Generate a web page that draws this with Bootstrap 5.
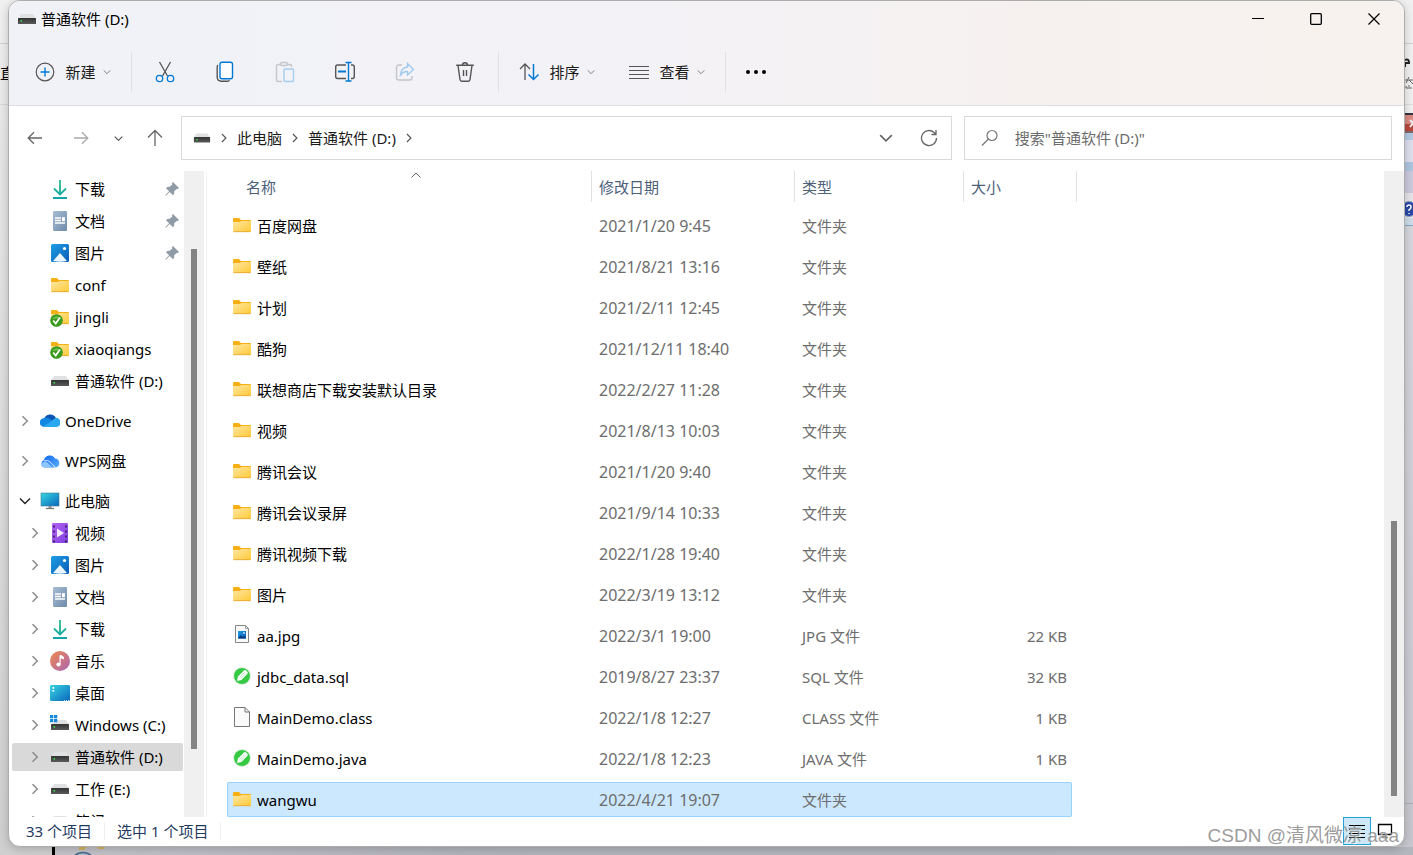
<!DOCTYPE html>
<html lang="zh-CN">
<head>
<meta charset="utf-8">
<meta name="viewport" content="width=device-width, initial-scale=1">
<title>普通软件 (D:)</title>
<link href="https://cdn.jsdelivr.net/npm/bootstrap@5.3.0/dist/css/bootstrap.min.css" rel="stylesheet">
<style>
  body { font-family: "Noto Sans", "Noto Sans CJK SC", sans-serif; font-size: 15px; line-height: 20px; color: #000; height: 100vh; background: linear-gradient(#f0f0f0, #e4e4e4 20%, #cfcfcf); }
  svg { display: block; flex: none; }
  .desk { z-index: 0; }
  .desk-foot { height: 8px; left: 55px; background: linear-gradient(90deg, #c3c3c9, #b2b4bc 30%, #b4b6be); border-left: 3px solid #000; margin-left: -3px; }
  .desk-left { width: 16px; height: 105px; top: 0; left: 0; border-bottom: 1px solid #d8d8d8; }
  .desk-side { width: 12px; }
  .win { z-index: 1; margin: 0 8px 8px 8px; background: #fff; border: 1px solid #adadad; border-radius: 12px; box-shadow: 0 2px 8px rgba(0,0,0,.2); min-height: 0; }
  .chrome { background: linear-gradient(90deg, #f0f2f8, #f3f2f6 45%, #f6f1ef 75%, #f7f2ee); border-bottom: 1px solid #dfdfe1; }
  .titlebar { height: 37px; padding: 0 1px 2px 8px; gap: 4px; }
  .tools { height: 67px; padding-left: 9px; }
  .plain { border: 0; border-radius: 4px; background: none; color: #1b1b1b; padding: 0; display: flex; align-items: center; justify-content: center; font-size: 15px; line-height: 20px; }
  .plain:hover { background: rgba(0,0,0,.05); }
  .t-menu { width: 110px; height: 40px; }
  .t-menu span { margin: 0 7px 0 10px; }
  .t-icon { width: 60px; height: 40px; }
  .t-more { width: 60px; height: 40px; }
  .t-sep { width: 1px; height: 40px; background: #e0e1e6; margin: 0 3px; }
  .capt { width: 58px; height: 37px; }
  .addr-row { padding: 10px 12px 11px 0; }
  .nav-set { width: 172px; }
  .nav-set .plain { height: 32px; }
  .n-back { width: 51px; }
  .n-next { width: 42px; }
  .n-list { width: 33px; }
  .n-up { width: 39px; }
  .n-hist { width: 42px; height: 32px; }
  .n-load { width: 34px; height: 32px; margin-left: 5px; }
  .field { height: 44px; border: 1px solid #d9d9d9; border-radius: 0; background: #fff; }
  .field-path { flex: 9 1 90px; margin-right: 12px; padding: 0 5px 0 11px; }
  .field-find { flex: 5 1 50px; padding-left: 16px; }
  .field-find input { border: 0; outline: 0; width: 100%; margin-left: 16px; padding: 0; background: none; color: #666; }
  .field-find input::placeholder { color: #6b6b6b; opacity: 1; }
  .crumb { color: #1a1a1a; text-decoration: none; }
  .main { min-height: 0; }
  .tree { width: 175px; padding: 4px 1px 0 3px; overflow: hidden; }
  .grp { display: flex; flex-direction: column; gap: 4px; margin-bottom: 12px; }
  .tree a { display: flex; align-items: center; height: 28px; color: #000; text-decoration: none; white-space: nowrap; border-radius: 2px; }
  .tree .pic { width: 20px; margin-right: 5px; }
  .tree .tw { width: 12px; margin-right: 9px; }
  .tree .lv1 { padding-left: 7px; }
  .tree .lv2 { padding-left: 17px; }
  .tree .cur { background: #d9d9d9; }
  .tree .pin { margin: 0 4px 0 auto; }
  .track { width: 20px; background: #f0f0f0; flex: none; padding-left: 7px; }
  .thumb { width: 6px; background: #858585; }
  .files { min-width: 0; overflow: hidden; border-left: 1px solid #f3f3f3; margin-left: 2px; padding-left: 20px; }
  .files table { table-layout: fixed; width: 850px; border-collapse: separate; border-spacing: 0 6px; margin-top: -6px; }
  .files th { height: 31px; font-weight: 400; color: #4c607a; padding: 0 0 0 7px; border-right: 1px solid #e2e2e2; position: relative; }
  .files th:first-child { padding-left: 19px; }
  .files td { height: 35px; padding: 0 0 0 7px; color: #6d6d6d; white-space: nowrap; border: 0 solid #99d1ff; }
  .files td:first-child { padding-left: 5px; color: #000; }
  .files td:nth-child(2) { font-size: 16px; }
  .files td:nth-child(4) { text-align: right; padding-right: 5px; }
  .files .pic { width: 20px; margin: 0 5px 2px 0; }
  .files .sel td:not(:last-child) { background: #cce8ff; border-width: 1px 0; }
  .files .sel td:first-child { border-left-width: 1px; padding-left: 4px; border-radius: 2px 0 0 2px; }
  .files .sel td:nth-child(4) { border-right-width: 1px; border-radius: 0 2px 2px 0; }
  .sorted { left: 183px; top: 0; }
  .status { height: 29px; color: #1f3a5f; padding: 0 5px 1px 17px; }
  .status .bar { width: 1px; height: 18px; background: #f0f0f0; margin: 0 12px; }
  .v-btn { width: 28px; height: 28px; border: 0; background: none; padding: 0; display: flex; align-items: center; justify-content: center; }
  .v-on { background: #cce8f6; border: 1px solid #26a0da; }
  .sign { z-index: 2; right: 14px; bottom: 6px; font: 19px/26px "Liberation Sans", "Noto Sans CJK SC", sans-serif; color: rgba(130,130,130,.8); text-shadow: 1px 1px 0 rgba(255,255,255,.7); }
</style>
</head>
<body class="d-flex flex-column overflow-hidden position-relative">

<svg width="0" height="0" class="position-absolute" aria-hidden="true">
  <defs>
    <linearGradient id="gF" x1="0" y1="0" x2="1" y2="1"><stop offset="0" stop-color="#ffe7a2"/><stop offset="1" stop-color="#ffc937"/></linearGradient>
    <linearGradient id="gD" x1="0" y1="0" x2="0" y2="1"><stop offset="0" stop-color="#35c48c"/><stop offset="1" stop-color="#14a3a8"/></linearGradient>
    <linearGradient id="gT" x1="0" y1="0" x2="1" y2="1"><stop offset="0" stop-color="#a9bdd3"/><stop offset="1" stop-color="#6d8aab"/></linearGradient>
    <linearGradient id="gP" x1="0" y1="0" x2="1" y2="1"><stop offset="0" stop-color="#1d9fe6"/><stop offset="1" stop-color="#0b5cb5"/></linearGradient>
    <linearGradient id="gM" x1="0" y1="0" x2="1" y2="1"><stop offset="0" stop-color="#37d6e0"/><stop offset="1" stop-color="#0b66bd"/></linearGradient>
    <linearGradient id="gV" x1="0" y1="0" x2="1" y2="1"><stop offset="0" stop-color="#b264f2"/><stop offset="1" stop-color="#7f3fe0"/></linearGradient>
    <linearGradient id="gU" x1="0" y1="0" x2="1" y2="1"><stop offset="0" stop-color="#f08a4b"/><stop offset="1" stop-color="#a963b5"/></linearGradient>
    <linearGradient id="gW" x1="0" y1="0" x2="1" y2="1"><stop offset="0" stop-color="#0f62f5"/><stop offset="1" stop-color="#59b0ff"/></linearGradient>
    <linearGradient id="gK" x1="0" y1="0" x2="0" y2="1"><stop offset="0" stop-color="#333"/><stop offset="1" stop-color="#5a5a5a"/></linearGradient>
    <symbol id="folder" viewBox="0 0 20 20"><path d="M1 4a1 1 0 0 1 1-1h5l2 2h9a1 1 0 0 1 1 1v2H1z" fill="#f6b015"/><path d="M1 7h7l1.500-1H19V16a1 1 0 0 1-1 1H2a1 1 0 0 1-1-1z" fill="url(#gF)"/><path d="M1.500 16.700h17" stroke="#e2a52b" stroke-width=".8"/></symbol>
    <symbol id="okfolder" viewBox="0 0 20 20"><use href="#folder"/><circle cx="6.500" cy="13.500" r="6.300" fill="#3a9a1d"/><path d="M2 12a5 5 0 0 1 9 0q-4-1-9 0" fill="#74c04a"/><path d="M3.200 13.500l2.500 3 4.300-6" fill="none" stroke="#fff" stroke-width="1.700"/></symbol>
    <symbol id="drive" viewBox="0 0 20 20"><path d="M4 5h12l3 4.500H1z" fill="#dfe1e3"/><rect x="1" y="9" width="18" height="6" rx=".6" fill="url(#gK)"/><rect x="3.500" y="11" width="1.600" height="1.600" fill="#35e04a"/></symbol>
    <symbol id="cdrive" viewBox="0 0 20 20"><path d="M5 5h11l3 4.500H2z" fill="#dfe1e3"/><rect x="1" y="9" width="18" height="6" rx=".6" fill="url(#gK)"/><rect x="3.500" y="11" width="1.600" height="1.600" fill="#35e04a"/><path d="M0 0h3.300v3.300H0zM4 0h3.300v3.300H4zM0 4h3.300v3.300H0zM4 4h3.300v3.300H4z" fill="#1688dc"/></symbol>
    <symbol id="down" viewBox="0 0 20 20"><path d="M10 1v14M4 9.500l6 6 6-6M3 19h14" fill="none" stroke="url(#gD)" stroke-width="1.900"/></symbol>
    <symbol id="doc" viewBox="0 0 20 20"><rect x="3" y="0" width="14" height="20" rx="1.200" fill="url(#gT)"/><path d="M5 7h6M5 9.500h6M5 12h10" stroke="#fff" stroke-width="1.300"/><rect x="12" y="6.200" width="3" height="4" fill="#fff"/></symbol>
    <symbol id="photo" viewBox="0 0 20 20"><rect x="1" y="1" width="18" height="18" rx="1.500" fill="url(#gP)"/><path d="M3 18l7-8 7 8q-7 1.500-14 0" fill="#eaf5ff"/><circle cx="14.500" cy="5.500" r="1.600" fill="#fff"/></symbol>
    <symbol id="cloud" viewBox="0 0 20 20"><path d="M4 8a6.500 6.500 0 0 1 12-1L9 12z" fill="#0a56b3"/><path d="M4.500 16A4.500 4.500 0 0 1 4 7q4-1 7 1.500l4 7.500z" fill="#1488e0"/><path d="M3 15.500L13 9l3-2.200a4.600 4.600 0 0 1 0 9.200H4.500z" fill="#29a8f0"/></symbol>
    <symbol id="wps" viewBox="0 0 20 20"><path d="M4 16.500a4 4 0 0 1 0-7.500 6 6 0 0 1 11-1.500 4.600 4.600 0 0 1 1 9z" fill="url(#gW)"/><path d="M1 13q4-4 7-1l4 4.500H4q-3-.5-3-3.500" fill="#8cc5ff"/><path d="M4 10q4-1.500 6 1t5.500 5.500" fill="none" stroke="#fff" stroke-width=".8"/></symbol>
    <symbol id="pc" viewBox="0 0 20 20"><rect x="1" y="2" width="18" height="13" fill="url(#gM)" stroke="#3d7e94" stroke-width=".6"/><path d="M8.500 15h3v2h-3z" fill="#909498"/><path d="M6 17.500h8" stroke="#6f7478" stroke-width="1.200"/></symbol>
    <symbol id="film" viewBox="0 0 20 20"><rect x="2" y="0" width="16" height="20" rx="1.200" fill="url(#gV)"/><path d="M4 2.500v17M16 2.500v17" stroke="#4b2374" stroke-width="2" stroke-dasharray="2 3"/><path d="M7 5.500l7 4.500-7 4.500z" fill="#f4eaff"/></symbol>
    <symbol id="tune" viewBox="0 0 20 20"><circle cx="10" cy="10" r="10" fill="url(#gU)"/><path d="M10 13.500V4.500q2 0 3.500 1.500v1.800L10.500 6.800" fill="#fff" stroke="#fff"/><circle cx="8.500" cy="13.500" r="2.100" fill="#fff"/></symbol>
    <symbol id="desk" viewBox="0 0 20 20"><rect y="2" width="20" height="16" rx="1.200" fill="url(#gM)"/><path d="M2.500 4h1.700v1.700H2.500zM2.500 7h1.700v1.700H2.500z" fill="#fff"/><path d="M14 17.500h5" stroke="#bfe5ff" stroke-dasharray="1 1"/></symbol>
    <symbol id="pinned" viewBox="0 0 14 14"><path d="M8 0l6 6-1.300 1.100-1-.2-2.500 2.400-.1 2.600-1.300 1.200-3.200-3.200L1 13.500.3 13.700.4 13l3.700-3.700L1 6.200l1.200-1.300 2.700-.1L7.300 2.300 7 1z" fill="#8f9ba6"/></symbol>
    <symbol id="right" viewBox="0 0 12 12"><path d="M3.500 1.200L8.300 6 3.500 10.800" fill="none" stroke="currentColor" stroke-width="1.400"/></symbol>
    <symbol id="caret" viewBox="0 0 12 12"><path d="M1 3.500l5 5 5-5" fill="none" stroke="currentColor" stroke-width="1.400"/></symbol>
    <symbol id="jpg" viewBox="0 0 20 20"><path d="M3.500.500h10l3 3v14h-13z" fill="#fafafa" stroke="#858585"/><path d="M13.500.500v3h3" fill="none" stroke="#858585" stroke-width=".8"/><rect x="6" y="6" width="8" height="7.500" fill="url(#gP)"/><path d="M6 13.500l2.500-3.500 2 2 1.500-1.500 2 3z" fill="#063b7d"/><circle cx="12" cy="8" r=".9" fill="#cdeaff"/></symbol>
    <symbol id="blank" viewBox="0 0 20 20"><path d="M2.500.500h10.500l4.500 4.500v14.500h-15z" fill="#fafafa" stroke="#777"/><path d="M13 .500v4.500h4.500" fill="none" stroke="#777"/></symbol>
    <symbol id="pen" viewBox="0 0 20 20"><circle cx="10" cy="10" r="9" fill="#e2eee2"/><circle cx="10" cy="10" r="8" fill="#36c944"/><path d="M5 15l1-4.500L12 4.500q1-1 2.300.2l1 1q1 1.100 0 2.200L9.500 14z" fill="#fff"/><path d="M7.500 11.500l5-5M8.800 12.700l5-5" stroke="#a0dfa6" stroke-width=".7"/></symbol>
  </defs>
</svg>

<!-- what shows round the edges of the window -->
<div class="desk desk-left position-absolute" aria-hidden="true"><svg width="9" height="44"><path d="M0 43.500h9" stroke="#cfcfcf"/></svg><div style="line-height:58px">直</div></div>
<svg class="desk desk-side position-absolute end-0 top-0" height="855" viewBox="0 0 12 855" aria-hidden="true">
  <defs><linearGradient id="gS" x1="0" y1="0" x2="0" y2="1"><stop offset="0" stop-color="#dcdce3"/><stop offset="1" stop-color="#c6c7ce"/></linearGradient></defs>
  <rect width="12" height="855" fill="url(#gS)"/><rect width="12" height="113" fill="#f0f0f0"/><path d="M0 43.500h12" stroke="#cfcfcf"/><path d="M0 104.500h12" stroke="#ddd"/>
  <path d="M4 60q4-2 4 3H4v4" fill="none" stroke="#222" stroke-width="2"/>
  <path d="M4 80h8M8 77l-3 6M8 80l4 4M5 86v2h6M8 85v2" fill="none" stroke="#666"/>
  <rect y="113" width="12" height="2" fill="#33333d"/><rect y="115" width="12" height="9" fill="#d98a83"/><rect y="124" width="12" height="7" fill="#b8483c"/><path d="M9 120l3 3-3 4" fill="none" stroke="#eee" stroke-width="2"/><rect y="131" width="12" height="2" fill="#7d6970"/>
  <rect y="133" width="12" height="7" fill="#b5cae2"/><rect y="140" width="12" height="22" fill="#dddfed"/><rect y="162" width="12" height="9" fill="#aec5df"/><rect y="171" width="12" height="22" fill="#cbcadd"/><rect y="193" width="12" height="25" fill="#e5e3e8"/><rect y="218" width="12" height="7" fill="#cedcea"/><path d="M0 225.500h12" stroke="#86a9c9"/>
  <circle cx="8" cy="209" r="7.500" fill="#2847a8" stroke="#8f9dbd"/><path d="M6 207q0-2 2-2t2 2-2 3v1M8 213v1" fill="none" stroke="#fff" stroke-width="1.500"/>
  <path d="M0 803.500h12" stroke="#a8abb9"/>
</svg>
<div class="desk desk-foot position-absolute end-0 bottom-0" aria-hidden="true"><svg width="60" height="8"><path d="M24 0h8l-3 3h-5zM42 0h8l-1 2h-6z" fill="#d3b65c"/><circle cx="28" cy="18" r="12.500" fill="#aebac6" stroke="#486a8c" stroke-width="1.500"/></svg></div>

<div class="win d-flex flex-column flex-grow-1 position-relative overflow-hidden">
  <header class="chrome">
    <div class="titlebar d-flex align-items-center">
      <svg width="20" height="20"><use href="#drive"/></svg><span>普通软件 (D:)</span>
      <div class="d-flex ms-auto">
        <button class="plain capt" aria-label="最小化"><svg width="12" height="12"><path d="M0 5.500h12" stroke="#000" stroke-width="1.200"/></svg></button>
        <button class="plain capt" aria-label="最大化"><svg width="12" height="12"><rect x=".7" y=".7" width="10.600" height="10.600" rx="1" fill="none" stroke="#000" stroke-width="1.300"/></svg></button>
        <button class="plain capt" aria-label="关闭"><svg width="12" height="12"><path d="M.5.500l11 11M11.500.500l-11 11" stroke="#000" stroke-width="1.200"/></svg></button>
      </div>
    </div>
    <div class="tools d-flex align-items-center" role="toolbar">
      <button class="plain t-menu"><svg width="20" height="20" fill="none" stroke="#555" stroke-width="1.200"><circle cx="10" cy="10" r="8.800"/><path d="M10 5.500v9M5.500 10h9" stroke="#0078d4" stroke-width="1.400"/></svg><span>新建</span><svg width="8" height="8" viewBox="0 0 12 12" color="#777"><use href="#caret"/></svg></button>
      <div class="t-sep"></div>
      <button class="plain t-icon" aria-label="剪切"><svg width="20" height="22" fill="none" stroke="#555" stroke-width="1.300"><path d="M4.500 1l8 14M15.500 1l-8 14"/><circle cx="4.500" cy="17.500" r="3.200" stroke="#0078d4"/><circle cx="15.500" cy="17.500" r="3.200" stroke="#0078d4"/></svg></button>
      <button class="plain t-icon" aria-label="复制"><svg width="18" height="22" fill="none" stroke-width="1.400"><path d="M2 4Q1.200 4.500 1.200 6v10q0 4.200 4.300 4.200h6q1.500 0 2-1" stroke="#555"/><rect x="4" y="1.200" width="12.500" height="16.500" rx="2" fill="#fff" stroke="#0078d4"/></svg></button>
      <button class="plain t-icon" aria-label="粘贴" disabled><svg width="20" height="22" fill="none" stroke="#c3c5c9" stroke-width="1.400"><path d="M7 20.500H3q-1.500 0-1.500-1.500V5Q1.500 3.500 3 3.500h2.500M12.500 3.500H15q1.500 0 1.500 1.500v1"/><rect x="5.500" y="1.500" width="7" height="3" rx="1.500"/><rect x="9" y="8" width="9.500" height="12.500" rx="1" stroke="#a5cdee"/></svg></button>
      <button class="plain t-icon" aria-label="重命名"><svg width="22" height="22" fill="none" stroke="#555" stroke-width="1.400"><path d="M12 4H3.500Q1.700 4 1.700 6v9.500q0 2 1.800 2H12M17 4h1.500Q20.300 4 20.300 6v9.500q0 2-1.800 2H17"/><path d="M4 10.500h8" stroke="#0078d4" stroke-width="2"/><path d="M14.500 1.500v18.500M11.500 1.500h6M11.500 20h6" stroke="#0078d4"/></svg></button>
      <button class="plain t-icon" aria-label="共享" disabled><svg width="20" height="20" fill="none" stroke="#c3c5c9" stroke-width="1.400"><path d="M7 3H4Q1.500 3 1.500 5.500v10q0 2.500 2.500 2.500h10.500q2.500 0 2.500-2.500V14"/><path d="M12.500 1.500l6 6-6 5.500v-3.500q-4-.5-7 3.500.5-7.500 7-8z" stroke="#a0caee"/></svg></button>
      <button class="plain t-icon" aria-label="删除"><svg width="20" height="22" fill="none" stroke="#555" stroke-width="1.400"><path d="M1.200 4.200h17.600M3 4.500l2 14q.3 1.700 1.700 1.700h6.600q1.500 0 1.700-1.700l2-14M8.500 9v6M11.500 9v6M7.500 4q0-2.300 2.500-2.300T12.500 4"/></svg></button>
      <div class="t-sep"></div>
      <button class="plain t-menu"><svg width="20" height="20" fill="none" stroke="#555" stroke-width="1.300"><path d="M6 18V2M1 7l5-5 5 5"/><path d="M14.500 2v15.500M9.500 12.500l5 5 5-5" stroke="#0078d4" stroke-width="1.500"/></svg><span>排序</span><svg width="8" height="8" viewBox="0 0 12 12" color="#777"><use href="#caret"/></svg></button>
      <button class="plain t-menu"><svg width="20" height="20" stroke="#555"><path d="M0 4.500h20M0 8.500h20M0 12.500h20M0 16.500h20"/></svg><span>查看</span><svg width="8" height="8" viewBox="0 0 12 12" color="#777"><use href="#caret"/></svg></button>
      <div class="t-sep me-0"></div>
      <button class="plain t-more" aria-label="更多"><svg width="20" height="4"><circle cx="2" cy="2" r="2"/><circle cx="10" cy="2" r="2"/><circle cx="18" cy="2" r="2"/></svg></button>
    </div>
  </header>

  <div class="addr-row d-flex">
    <div class="nav-set d-flex align-items-center">
      <button class="plain n-back" aria-label="后退"><svg width="16" height="14" fill="none" stroke="#666" stroke-width="1.300"><path d="M15 7H1.500M7 1.200L1.200 7 7 12.800"/></svg></button>
      <button class="plain n-next" aria-label="前进"><svg width="16" height="14" fill="none" stroke="#aaa" stroke-width="1.300"><path d="M1 7h13.500M9 1.200L14.800 7 9 12.800"/></svg></button>
      <button class="plain n-list" aria-label="最近的位置"><svg width="9" height="9" viewBox="0 0 12 12" color="#444"><use href="#caret"/></svg></button>
      <button class="plain n-up" aria-label="向上"><svg width="16" height="18" fill="none" stroke="#666" stroke-width="1.300"><path d="M8 17V1.500M1 8.500l7-7 7 7"/></svg></button>
    </div>
    <nav class="field field-path d-flex align-items-center" aria-label="路径">
      <svg width="18" height="18"><use href="#drive"/></svg>
      <svg class="mx-2" width="10" height="10" color="#555"><use href="#right"/></svg>
      <a class="crumb" href="#">此电脑</a>
      <svg class="mx-2" width="10" height="10" color="#555"><use href="#right"/></svg>
      <a class="crumb" href="#">普通软件 (D:)</a>
      <svg class="mx-2" width="10" height="10" color="#555"><use href="#right"/></svg>
      <button class="plain n-hist ms-auto" aria-label="以前的位置"><svg width="14" height="14" color="#666"><use href="#caret"/></svg></button>
      <button class="plain n-load" aria-label="刷新"><svg width="18" height="18" fill="none" stroke="#666" stroke-width="1.300"><path d="M16.500 9A7.500 7.500 0 1 1 14.300 3.700l1.700 1.600M16 1v4.500h-4.500"/></svg></button>
    </nav>
    <label class="field field-find d-flex align-items-center">
      <svg width="18" height="18" fill="none" stroke="#777" stroke-width="1.200"><circle cx="11" cy="6.500" r="5"/><path d="M7.500 10L1 16.500"/></svg>
      <input type="text" placeholder="搜索&quot;普通软件 (D:)&quot;" aria-label="搜索">
    </label>
  </div>

  <div class="main d-flex flex-grow-1">
    <nav class="tree flex-shrink-0" aria-label="导航窗格">
      <div class="grp">
        <a class="lv2" href="#"><span class="tw"></span><svg class="pic" height="20"><use href="#down"/></svg>下载<svg class="pin" width="14" height="14"><use href="#pinned"/></svg></a>
        <a class="lv2" href="#"><span class="tw"></span><svg class="pic" height="20"><use href="#doc"/></svg>文档<svg class="pin" width="14" height="14"><use href="#pinned"/></svg></a>
        <a class="lv2" href="#"><span class="tw"></span><svg class="pic" height="20"><use href="#photo"/></svg>图片<svg class="pin" width="14" height="14"><use href="#pinned"/></svg></a>
        <a class="lv2" href="#"><span class="tw"></span><svg class="pic" height="20"><use href="#folder"/></svg>conf</a>
        <a class="lv2" href="#"><span class="tw"></span><svg class="pic" height="20"><use href="#okfolder"/></svg>jingli</a>
        <a class="lv2" href="#"><span class="tw"></span><svg class="pic" height="20"><use href="#okfolder"/></svg>xiaoqiangs</a>
        <a class="lv2" href="#"><span class="tw"></span><svg class="pic" height="20"><use href="#drive"/></svg>普通软件 (D:)</a>
      </div>
      <div class="grp"><a class="lv1" href="#"><svg class="tw" height="12" color="#888"><use href="#right"/></svg><svg class="pic" height="20"><use href="#cloud"/></svg>OneDrive</a></div>
      <div class="grp"><a class="lv1" href="#"><svg class="tw" height="12" color="#888"><use href="#right"/></svg><svg class="pic" height="20"><use href="#wps"/></svg>WPS网盘</a></div>
      <div class="grp">
        <a class="lv1" href="#"><svg class="tw" height="12" color="#222"><use href="#caret"/></svg><svg class="pic" height="20"><use href="#pc"/></svg>此电脑</a>
        <a class="lv2" href="#"><svg class="tw" height="12" color="#888"><use href="#right"/></svg><svg class="pic" height="20"><use href="#film"/></svg>视频</a>
        <a class="lv2" href="#"><svg class="tw" height="12" color="#888"><use href="#right"/></svg><svg class="pic" height="20"><use href="#photo"/></svg>图片</a>
        <a class="lv2" href="#"><svg class="tw" height="12" color="#888"><use href="#right"/></svg><svg class="pic" height="20"><use href="#doc"/></svg>文档</a>
        <a class="lv2" href="#"><svg class="tw" height="12" color="#888"><use href="#right"/></svg><svg class="pic" height="20"><use href="#down"/></svg>下载</a>
        <a class="lv2" href="#"><svg class="tw" height="12" color="#888"><use href="#right"/></svg><svg class="pic" height="20"><use href="#tune"/></svg>音乐</a>
        <a class="lv2" href="#"><svg class="tw" height="12" color="#888"><use href="#right"/></svg><svg class="pic" height="20"><use href="#desk"/></svg>桌面</a>
        <a class="lv2" href="#"><svg class="tw" height="12" color="#888"><use href="#right"/></svg><svg class="pic" height="20"><use href="#cdrive"/></svg>Windows (C:)</a>
        <a class="lv2 cur" href="#" aria-current="true"><svg class="tw" height="12" color="#888"><use href="#right"/></svg><svg class="pic" height="20"><use href="#drive"/></svg>普通软件 (D:)</a>
        <a class="lv2" href="#"><svg class="tw" height="12" color="#888"><use href="#right"/></svg><svg class="pic" height="20"><use href="#drive"/></svg>工作 (E:)</a>
        <a class="lv2" href="#"><svg class="tw" height="12" color="#888"><use href="#right"/></svg><svg class="pic" height="20"><use href="#drive"/></svg>笔记 (F:)</a>
      </div>
    </nav>
    <div class="track"><div style="height:12%"></div><div class="thumb" style="height:77.500%"></div></div>

    <section class="files flex-grow-1">
      <table>
        <colgroup><col style="width:365px"><col style="width:203px"><col style="width:169px"><col style="width:108px"><col style="width:5px"></colgroup>
        <thead><tr><th scope="col">名称<svg class="sorted position-absolute" width="12" height="8" fill="none" stroke="#666"><path d="M1.500 6.500L6 2l4.500 4.500"/></svg></th><th scope="col">修改日期</th><th scope="col">类型</th><th scope="col" colspan="2">大小</th></tr></thead>
        <tbody>
          <tr><td><div class="d-flex align-items-center"><svg class="pic" height="20"><use href="#folder"/></svg>百度网盘</div></td><td>2021/1/20 9:45</td><td>文件夹</td><td></td><td></td></tr>
          <tr><td><div class="d-flex align-items-center"><svg class="pic" height="20"><use href="#folder"/></svg>壁纸</div></td><td>2021/8/21 13:16</td><td>文件夹</td><td></td><td></td></tr>
          <tr><td><div class="d-flex align-items-center"><svg class="pic" height="20"><use href="#folder"/></svg>计划</div></td><td>2021/2/11 12:45</td><td>文件夹</td><td></td><td></td></tr>
          <tr><td><div class="d-flex align-items-center"><svg class="pic" height="20"><use href="#folder"/></svg>酷狗</div></td><td>2021/12/11 18:40</td><td>文件夹</td><td></td><td></td></tr>
          <tr><td><div class="d-flex align-items-center"><svg class="pic" height="20"><use href="#folder"/></svg>联想商店下载安装默认目录</div></td><td>2022/2/27 11:28</td><td>文件夹</td><td></td><td></td></tr>
          <tr><td><div class="d-flex align-items-center"><svg class="pic" height="20"><use href="#folder"/></svg>视频</div></td><td>2021/8/13 10:03</td><td>文件夹</td><td></td><td></td></tr>
          <tr><td><div class="d-flex align-items-center"><svg class="pic" height="20"><use href="#folder"/></svg>腾讯会议</div></td><td>2021/1/20 9:40</td><td>文件夹</td><td></td><td></td></tr>
          <tr><td><div class="d-flex align-items-center"><svg class="pic" height="20"><use href="#folder"/></svg>腾讯会议录屏</div></td><td>2021/9/14 10:33</td><td>文件夹</td><td></td><td></td></tr>
          <tr><td><div class="d-flex align-items-center"><svg class="pic" height="20"><use href="#folder"/></svg>腾讯视频下载</div></td><td>2022/1/28 19:40</td><td>文件夹</td><td></td><td></td></tr>
          <tr><td><div class="d-flex align-items-center"><svg class="pic" height="20"><use href="#folder"/></svg>图片</div></td><td>2022/3/19 13:12</td><td>文件夹</td><td></td><td></td></tr>
          <tr><td><div class="d-flex align-items-center"><svg class="pic" height="20"><use href="#jpg"/></svg>aa.jpg</div></td><td>2022/3/1 19:00</td><td>JPG 文件</td><td>22 KB</td><td></td></tr>
          <tr><td><div class="d-flex align-items-center"><svg class="pic" height="20"><use href="#pen"/></svg>jdbc_data.sql</div></td><td>2019/8/27 23:37</td><td>SQL 文件</td><td>32 KB</td><td></td></tr>
          <tr><td><div class="d-flex align-items-center"><svg class="pic" height="20"><use href="#blank"/></svg>MainDemo.class</div></td><td>2022/1/8 12:27</td><td>CLASS 文件</td><td>1 KB</td><td></td></tr>
          <tr><td><div class="d-flex align-items-center"><svg class="pic" height="20"><use href="#pen"/></svg>MainDemo.java</div></td><td>2022/1/8 12:23</td><td>JAVA 文件</td><td>1 KB</td><td></td></tr>
          <tr class="sel"><td><div class="d-flex align-items-center"><svg class="pic" height="20"><use href="#folder"/></svg>wangwu</div></td><td>2022/4/21 19:07</td><td>文件夹</td><td></td><td></td></tr>
        </tbody>
      </table>
    </section>
    <div class="track"><div style="height:54.200%"></div><div class="thumb" style="height:42.500%"></div></div>
  </div>

  <footer class="status d-flex align-items-center">
    <span>33 个项目</span><span class="bar"></span><span>选中 1 个项目</span><span class="bar"></span>
    <div class="d-flex ms-auto">
      <button class="v-btn v-on" aria-label="详细信息"><svg width="16" height="16" stroke="#000"><path d="M0 2.500h16M0 6.500h16M0 10.500h16M0 14.500h16"/></svg></button>
      <button class="v-btn" aria-label="大图标"><svg width="16" height="16" fill="none" stroke="#000" stroke-width="1.300"><path d="M1.500 1.500h13v10h-13zM5 14.500h6"/></svg></button>
    </div>
  </footer>
</div>
<div class="sign position-absolute">CSDN @清风微凉 aaa</div>
<script src="https://cdn.jsdelivr.net/npm/bootstrap@5.3.0/dist/js/bootstrap.bundle.min.js"></script>
</body>
</html>
